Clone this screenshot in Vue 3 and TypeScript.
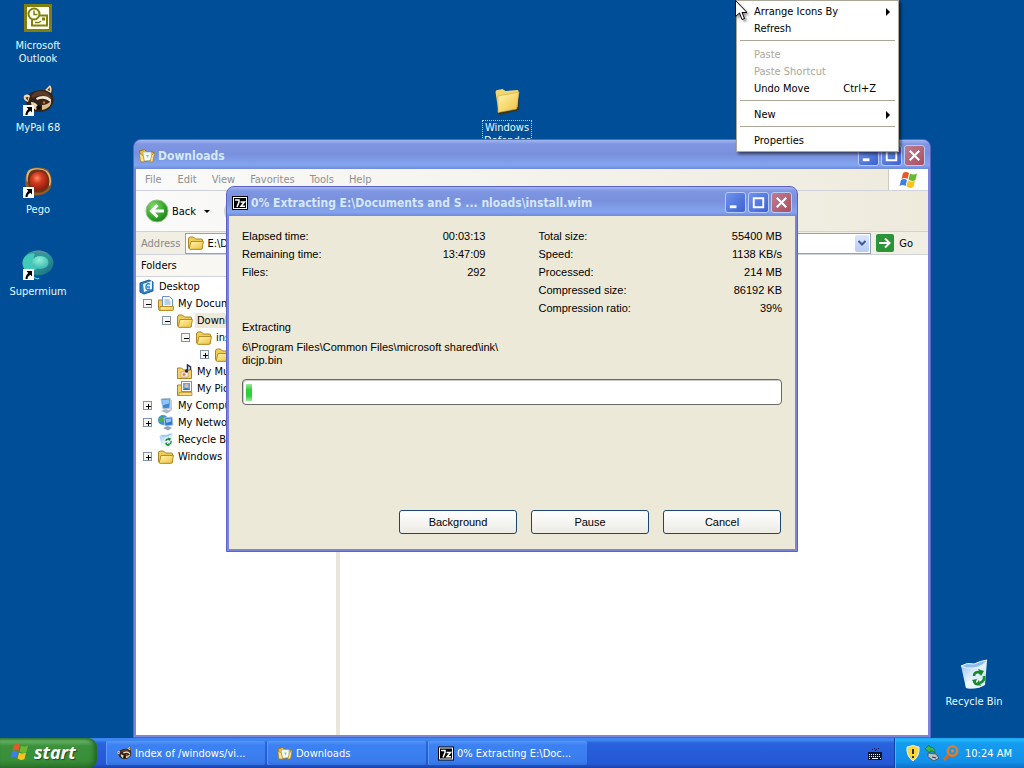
<script setup lang="ts">
import { ref } from 'vue'

interface TreeNode {
  label: string
  icon: string
  level: number
  toggle?: '+' | '-'
  selected?: boolean
}
interface Stat {
  label: string
  value: string
}

const shortcuts = [
  { id: 'outlook', label: 'Microsoft Outlook', icon: 'i-outlook', link: false },
  { id: 'mypal', label: 'MyPal 68', icon: 'i-raccoon', link: true },
  { id: 'pego', label: 'Pego', icon: 'i-pego', link: true },
  { id: 'supermium', label: 'Supermium', icon: 'i-supermium', link: true },
]

const menus = ['File', 'Edit', 'View', 'Favorites', 'Tools', 'Help']

const tree: TreeNode[] = [
  { label: 'Desktop', icon: 'i-desktop', level: 0 },
  { label: 'My Documents', icon: 'i-docs', level: 1, toggle: '-' },
  { label: 'Downloads', icon: 'i-folder', level: 2, toggle: '-', selected: true },
  { label: 'install', icon: 'i-folder', level: 3, toggle: '-' },
  { label: '', icon: 'i-folder', level: 4, toggle: '+' },
  { label: 'My Music', icon: 'i-music', level: 2 },
  { label: 'My Pictures', icon: 'i-pics', level: 2 },
  { label: 'My Computer', icon: 'i-computer', level: 1, toggle: '+' },
  { label: 'My Network Places', icon: 'i-network', level: 1, toggle: '+' },
  { label: 'Recycle Bin', icon: 'i-bin', level: 1 },
  { label: 'Windows Defender', icon: 'i-folder', level: 1, toggle: '+' },
]

const timing: Stat[] = [
  { label: 'Elapsed time:', value: '00:03:13' },
  { label: 'Remaining time:', value: '13:47:09' },
  { label: 'Files:', value: '292' },
]
const sizes: Stat[] = [
  { label: 'Total size:', value: '55400 MB' },
  { label: 'Speed:', value: '1138 KB/s' },
  { label: 'Processed:', value: '214 MB' },
  { label: 'Compressed size:', value: '86192 KB' },
  { label: 'Compression ratio:', value: '39%' },
]

const contextGroups = [
  [{ label: 'Arrange Icons By', sub: true }, { label: 'Refresh' }],
  [
    { label: 'Paste', disabled: true },
    { label: 'Paste Shortcut', disabled: true },
    { label: 'Undo Move', key: 'Ctrl+Z' },
  ],
  [{ label: 'New', sub: true }],
  [{ label: 'Properties' }],
] as { label: string; sub?: boolean; disabled?: boolean; key?: string }[][]

const tasks = [
  { label: 'Index of /windows/vi...', icon: 'i-raccoon' },
  { label: 'Downloads', icon: 'i-open' },
  { label: '0% Extracting E:\\Doc...', icon: 'i-7z' },
]

const address = ref('E:\\Documents and Settings\\Downloads')
</script>

<template>
  <div class="screen">
    <svg class="sprites" aria-hidden="true">
      <defs>
        <linearGradient id="gFolder" x1="0" y1="0" x2="1" y2="1">
          <stop offset="0" stop-color="#fff6b0" /><stop offset="1" stop-color="#eebf3c" />
        </linearGradient>
        <radialGradient id="gRed" cx=".4" cy=".35" r=".65">
          <stop offset="0" stop-color="#ff8a68" /><stop offset=".4" stop-color="#d23c22" /><stop offset="1" stop-color="#8e1c0c" />
        </radialGradient>
        <linearGradient id="gTeal" x1="0" y1="0" x2="1" y2="1">
          <stop offset="0" stop-color="#2e8f98" /><stop offset=".5" stop-color="#2f9a9c" /><stop offset="1" stop-color="#17667c" />
        </linearGradient>
        <radialGradient id="gMint" cx=".45" cy=".3" r=".75">
          <stop offset="0" stop-color="#8ff0da" /><stop offset="1" stop-color="#35b5ac" />
        </radialGradient>
        <radialGradient id="gGreen" cx=".35" cy=".3" r=".8">
          <stop offset="0" stop-color="#86db6c" /><stop offset=".6" stop-color="#35a52c" /><stop offset="1" stop-color="#1b7a1b" />
        </radialGradient>
        <linearGradient id="gBin" x1="0" y1="0" x2="1" y2="1">
          <stop offset="0" stop-color="#8fbcf0" /><stop offset=".5" stop-color="#e2f2ff" /><stop offset="1" stop-color="#c3dff2" />
        </linearGradient>
      </defs>
      <symbol id="i-outlook" viewBox="0 0 32 32">
        <rect x="2" y="2" width="28" height="28" fill="#808010" />
        <rect x="5" y="5" width="22" height="22" fill="#fffef0" />
        <path d="M15 13.500h10v10H10v-6" fill="none" stroke="#808010" stroke-width="2" />
        <circle cx="12" cy="12" r="5.500" fill="#fffef0" stroke="#808010" stroke-width="2" />
        <path d="M12 8.500v4h3.500" fill="none" stroke="#808010" stroke-width="1.500" />
        <path d="M13 20.500h4l2-1.500" fill="none" stroke="#808010" stroke-width="1.300" /><rect x="20" y="15.500" width="3" height="3" fill="#808010" />
      </symbol>
      <symbol id="i-raccoon" viewBox="0 0 32 32">
        <path d="M3 15c2-5 8-8 15-9l5 0l5-5c3 1 3 5 2 9c2 5 2 9-1 13c-4 5-12 6-17 4c-4-1-8-6-9-12z" fill="#33231b" />
        <path d="M2 12c1-2 5-2 6 0l-2 6c-3-1-5-3-4-6zM23 6l5-5c2 2 2 5 1 8z" fill="#e9d8b6" />
        <path d="M3.500 13.500q2-1 3 0l-1 3zM25.500 6l2-2.500.5 3.500z" fill="#4a3022" />
        <path d="M9 12c5-6 13-7 19-1l2 6c-5-6-12-7-19-3z" fill="#5d3d2a" />
        <path d="M14 14c5-3 11-3 15 1.500l0 3c-4-4-9-5-14-2.500z" fill="#f5ecd6" />
        <path d="M20 21c4 0 7-2 9-4c1 4-3 8-9 9z" fill="#d9bd8a" />
        <path d="M9 18c3 0 5 1 7 4l-2 4c-3-2-5-4-5-8z" fill="#e9d8b6" />
        <circle cx="22" cy="18.500" r="1.300" fill="#c86a28" /><circle cx="16.500" cy="23.500" r="2.200" fill="#120c0a" />
      </symbol>
      <symbol id="i-pego" viewBox="0 0 32 32">
        <path d="M8 3c6-2 13-2 18 1c4 5 5 13 2 19c-4 6-13 8-20 5c-6-6-7-19 0-25z" fill="#8c5a2c" />
        <path d="M7 4c6-3 14-2 18 1c4 4 5 10 3 15c-5-3-16-8-23-4c-1-4-1-9 2-12z" fill="#deb876" />
        <path d="M9 5c5-2 11-2 15 1c4 5 4 11 2 16c-4 5-11 6-16 3c-5-5-6-15-1-20z" fill="#6b3417" />
        <circle cx="17" cy="15" r="9.500" fill="url(#gRed)" />
      </symbol>
      <symbol id="i-supermium" viewBox="0 0 32 32">
        <ellipse cx="16" cy="15" rx="15.500" ry="12.500" fill="url(#gTeal)" />
        <path d="M1 12c2-5 8-8 12-6c-3 5-1 10 4 12c-4 6-10 7-13 5c-3-3-4-7-3-11z" fill="#43c9b8" />
        <path d="M10 13c3-7 13-6 16-1c2 5-2 9-8 9c-5 0-8-3-8-8z" fill="url(#gMint)" />
        <path d="M8 5c6-4 14-3 18 1c-6-1-12-2-18-1z" fill="#5f8f9a" />
        <path d="M12 29c2 2 4 2 5 1" stroke="#43c6d8" fill="none" stroke-width="1.500" />
      </symbol>
      <symbol id="i-arrow" viewBox="0 0 11 11">
        <rect width="11" height="11" fill="#fff" />
        <path d="M3.500 2H9v5.500L7.300 5.800C5.500 7 4.700 8 4.500 10H2.500C2.500 7.500 3.500 5.500 5.300 3.900z" fill="#000" />
      </symbol>
      <symbol id="i-bigfolder" viewBox="0 0 32 32">
        <path d="M6 29L27 25l1-15 1 1-1 15-19 5z" fill="#3a3518" />
        <path d="M4.500 8q0-2 2-2l5-1 3 2 12-1q1 0 1 2l-1 15-19 5z" fill="#f2d673" />
        <path d="M7 12l21-4-2.500 17L7 28.500z" fill="url(#gFolder)" stroke="#cfa93a" stroke-width=".6" />
      </symbol>
      <symbol id="i-folder" viewBox="0 0 16 16">
        <path d="M.5 4q0-2 2-2h3l2 2h6q1 0 1 1v8q0 1-1 1H2.500q-2 0-2-2z" fill="#f0cd58" stroke="#ad8420" />
        <path d="M3 6.500h12.500l-1.500 7q-.5 .8-1.500 .8H2.200q-1 0-.9-1z" fill="url(#gFolder)" stroke="#b78d27" />
      </symbol>
      <symbol id="i-open" viewBox="0 0 16 16">
        <path d="M.5 3l5-1.500 2 2 7 .5v8L2 14z" fill="#e7b93f" stroke="#9b7420" />
        <path d="M4 4h8l1 8-8 1z" fill="#f4faf4" stroke="#9ab0c0" stroke-width=".6" />
        <path d="M7 7l3 0-1.500 3z" fill="#8fc98f" />
        <path d="M.5 5.500l3.500 2 1.500 6.500-4-.5zM15.500 4.500l-3 3-1.500 7 3-1.500z" fill="#ffe58a" stroke="#a67d20" stroke-width=".6" />
      </symbol>
      <symbol id="i-docs" viewBox="0 0 16 16">
        <path d="M.5 4h4v10.500H2q-1.500 0-1.500-2z" fill="#f0cd58" stroke="#ad8420" />
        <path d="M4.500 .5h7l3 3V12h-10z" fill="#f4f9ff" stroke="#6d8fb8" />
        <path d="M6.500 4h5M6.500 6h6M6.500 8h6" stroke="#7da4d8" />
        <path d="M2 10.500h13.500v3q0 1-1 1H2z" fill="url(#gFolder)" stroke="#b78d27" />
      </symbol>
      <symbol id="i-music" viewBox="0 0 16 16">
        <path d="M.5 4h4l2 2h8v8.500H.5z" fill="#f3d468" stroke="#ad8420" />
        <rect x="4" y="8" width="7" height="5" fill="#fff2ea" stroke="#b88" stroke-width=".6" />
        <circle cx="7" cy="10.500" r="1.500" fill="#e08050" />
        <path d="M10.500 7V1l3 2v3" fill="none" stroke="#23304f" stroke-width="1.500" /><circle cx="9.500" cy="7" r="1.700" fill="#23304f" />
      </symbol>
      <symbol id="i-pics" viewBox="0 0 16 16">
        <path d="M.5 4h4l2 2h8v8.500H.5z" fill="#f3d468" stroke="#ad8420" />
        <rect x="4.500" y=".5" width="10" height="10" fill="#fff" stroke="#7892b4" />
        <rect x="6" y="2" width="7" height="7" fill="#66a5e6" /><circle cx="9.500" cy="5" r="2" fill="#f0b98f" /><path d="M6 9q3-4 7 0z" fill="#3b6db2" />
        <path d="M2 11.500h13v3H2z" fill="#f7dc7c" stroke="#b78d27" stroke-width=".7" />
      </symbol>
      <symbol id="i-computer" viewBox="0 0 16 16">
        <path d="M3 1l9-1 1 10-8 1z" fill="#3f86d9" stroke="#b8c7d8" />
        <path d="M4 2l7-.7 .3 4-6.500 2z" fill="#8cc5f6" />
        <path d="M12 1l2 1v10l-3 2z" fill="#c4ccd6" /><path d="M3 13l5-2 5 2-4 2.500z" fill="#aeb8c4" />
      </symbol>
      <symbol id="i-network" viewBox="0 0 16 16">
        <circle cx="5" cy="5" r="5" fill="#3f8fd0" /><path d="M1 3q4-3 6 0l-2 4-4 0z" fill="#49b04c" />
        <path d="M6 3l8-1 1 8-8 1z" fill="#2f76d0" stroke="#a9c4e3" /><path d="M7.500 4l5.500-.6 .3 3-5 1.600z" fill="#8cc5f6" />
        <path d="M5 13l5-2 4 2-4 2.500z" fill="#8fa4bc" />
      </symbol>
      <symbol id="i-desktop" viewBox="0 0 16 16">
        <path d="M1 4l9-3 4 2v9l-9 3-4-2z" fill="#2f80c8" stroke="#1c5c98" />
        <path d="M4 5l9-3v8l-8 3z" fill="#e8f5ff" />
        <path d="M11 5q-4-1-4 3t4 2M8 8h3" fill="none" stroke="#2a82cf" stroke-width="1.500" />
      </symbol>
      <symbol id="i-bin" viewBox="0 0 32 32">
        <path d="M3 8l13 1 13-6-2 24q-8 5-19 3z" fill="url(#gBin)" />
        <path d="M3 8q6-4 13-2q6-3 13-4q-3 6-13 8q-8 1-13-2z" fill="#8ebcf0" stroke="#e8f6ff" stroke-width="1" />
        <path d="M7 24q10-2 20-4l-.5 7q-8 5-18.500 3z" fill="#f2fbff" opacity=".7" />
        <g fill="none" stroke="#178a2c" stroke-width="2.600"><path d="M16 18q0-4 5-4l2 2" /><path d="M26 18q1 5-4 7" /><path d="M21 26q-4 1-5-3" /></g>
        <path d="M20 11l6 2-3 5zM14 22l5-1-2 5zM21 22l-3 4 5 2z" fill="#178a2c" />
      </symbol>
      <symbol id="i-7z" viewBox="0 0 16 14">
        <rect width="16" height="14" fill="#000" /><rect x="1" y="1" width="14" height="12" fill="#fff" /><rect x="2" y="2" width="12" height="10" fill="#000" />
        <path d="M3 4h4v2L5 11M8.500 6h4L9 10.300h4" fill="none" stroke="#fff" stroke-width="1.500" />
      </symbol>
      <symbol id="i-flag" viewBox="0 0 20 20">
        <path d="M4 3q3-2 6 0L8.500 9q-3-2-6 0z" fill="#e8562a" />
        <path d="M11 3.500q3 2 7 0L16.500 10q-3.500 2-7-.5z" fill="#69b82e" />
        <path d="M2 10q3-2 6 0l-1.500 6q-3-2-6 0z" fill="#3f7de8" />
        <path d="M9 10.500q3 2 7 0L14.500 17q-3.500 2-7-.5z" fill="#f8c520" />
      </symbol>
      <symbol id="i-keyboard" viewBox="0 0 14 12">
        <path d="M4 1.500h1M6 .5h1M8 1.500h1M10 .5h1M7 2.500h1" stroke="#081430" />
        <rect y="4" width="14" height="8" fill="#081430" />
        <path d="M1 6.500h12M1 8.500h12" stroke="#fff" stroke-dasharray="1 1" /><path d="M1 10.500h1M4 10.500h6M12 10.500h1" stroke="#fff" />
      </symbol>
      <symbol id="i-shield" viewBox="0 0 16 16">
        <path d="M8 0q3 2 6 2q1 9-6 14q-7-5-6-14q3 0 6-2z" fill="#f8d838" stroke="#eef2f8" />
        <path d="M8 4v5M8 11v2" stroke="#3a2c00" stroke-width="2" />
      </symbol>
      <symbol id="i-eject" viewBox="0 0 16 16">
        <path d="M4 8l8 1 3 4-5 3-6-4z" fill="#b9c2c9" stroke="#4c5b68" /><path d="M8 12l4 1" stroke="#333" />
        <path d="M1 4l4-4 1 2q5 0 5 6q-2-3-5-2v2z" fill="#3cb648" stroke="#14702a" stroke-width=".7" />
      </symbol>
      <symbol id="i-search" viewBox="0 0 16 16">
        <circle cx="9.500" cy="6" r="4.700" fill="none" stroke="#e07c2c" stroke-width="2.600" />
        <path d="M6 9.500L1 15" stroke="#d96b20" stroke-width="3" /><circle cx="9.500" cy="6" r="1.500" fill="#e88c3c" />
      </symbol>
    </svg>

    <main class="workspace">
      <nav class="shortcuts" aria-label="Desktop shortcuts">
        <button v-for="s in shortcuts" :key="s.id" type="button" class="shortcut">
          <span class="picture">
            <svg class="big"><use :href="'#' + s.icon" /></svg>
            <svg v-if="s.link" class="overlay"><use href="#i-arrow" /></svg>
          </span>
          <span class="caption">{{ s.label }}</span>
        </button>
      </nav>

      <button type="button" class="shortcut defender">
        <span class="picture"><svg class="big"><use href="#i-bigfolder" /></svg></span>
        <span class="caption focused">Windows Defender</span>
      </button>

      <button type="button" class="shortcut recycle">
        <span class="picture"><svg class="big"><use href="#i-bin" /></svg></span>
        <span class="caption">Recycle Bin</span>
      </button>

      <section class="window explorer" aria-label="Downloads">
        <header class="titlebar">
          <svg class="ico"><use href="#i-open" /></svg>
          <h1>Downloads</h1>
          <span class="controls">
            <button type="button" aria-label="Minimize"><svg viewBox="0 0 20 20"><path d="M4 14.500h7" stroke="#fff" stroke-width="3" /></svg></button>
            <button type="button" aria-label="Maximize"><svg viewBox="0 0 20 20"><path d="M4 5.500h12M5 5v10h10V5" stroke="#fff" stroke-width="2" fill="none" /></svg></button>
            <button type="button" class="close" aria-label="Close"><svg viewBox="0 0 20 20"><path d="M5 5l10 10M15 5L5 15" stroke="#fff" stroke-width="2.200" /></svg></button>
          </span>
        </header>
        <div class="menubar">
          <button v-for="m in menus" :key="m" type="button">{{ m }}</button>
          <span class="brand"><svg><use href="#i-flag" /></svg></span>
        </div>
        <div class="toolbar">
          <button type="button" class="back">
            <svg viewBox="0 0 24 24"><circle cx="12" cy="12" r="11" fill="url(#gGreen)" stroke="#8fc583" /><path d="M19 12H7M12.500 6L6.500 12l6 6" fill="none" stroke="#fff" stroke-width="3" /></svg>
            <span>Back</span>
            <i class="caret"></i>
          </button>
          <button type="button" class="forward" aria-label="Forward"></button>
        </div>
        <div class="addressbar">
          <label for="address">Address</label>
          <div class="combo">
            <svg class="ico"><use href="#i-folder" /></svg>
            <input id="address" v-model="address" type="text" />
            <button type="button" aria-label="Show addresses"><svg viewBox="0 0 14 16"><path d="M3.500 6l3.500 3.500L10.500 6" fill="none" stroke="#3c5a92" stroke-width="2" /></svg></button>
          </div>
          <button type="button" class="go">
            <svg viewBox="0 0 18 18"><rect width="18" height="18" rx="2" fill="#2c9438" /><path d="M3 9h10M9 4.500L13.500 9 9 13.500" fill="none" stroke="#fff" stroke-width="2" /></svg>
            <span>Go</span>
          </button>
        </div>
        <div class="panes">
          <aside class="folders">
            <h2>Folders</h2>
            <ul>
              <li v-for="(n, i) in tree" :key="i" :class="'level' + n.level">
                <button v-if="n.toggle" type="button" class="toggle" :aria-label="n.toggle === '+' ? 'Expand' : 'Collapse'">
                  <svg viewBox="0 0 9 9"><path d="M2 4.500h5" stroke="#000" /><path v-if="n.toggle === '+'" d="M4.500 2v5" stroke="#000" /></svg>
                </button>
                <span v-else-if="n.level" class="spacer"></span>
                <svg class="ico"><use :href="'#' + n.icon" /></svg>
                <span class="name" :class="{ selected: n.selected }">{{ n.label }}</span>
              </li>
            </ul>
          </aside>
          <div class="files"></div>
        </div>
      </section>

      <section class="window dialog" role="dialog" aria-label="Extracting">
        <header class="titlebar">
          <svg class="ico seven"><use href="#i-7z" /></svg>
          <h1>0% Extracting E:\Documents and S ... nloads\install.wim</h1>
          <span class="controls">
            <button type="button" aria-label="Minimize"><svg viewBox="0 0 20 20"><path d="M4 14.500h7" stroke="#fff" stroke-width="3" /></svg></button>
            <button type="button" aria-label="Maximize"><svg viewBox="0 0 20 20"><path d="M4 5.500h12M5 5v10h10V5" stroke="#fff" stroke-width="2" fill="none" /></svg></button>
            <button type="button" class="close" aria-label="Close"><svg viewBox="0 0 20 20"><path d="M5 5l10 10M15 5L5 15" stroke="#fff" stroke-width="2.200" /></svg></button>
          </span>
        </header>
        <div class="body">
          <div class="stats">
            <dl><div v-for="s in timing" :key="s.label"><dt>{{ s.label }}</dt><dd>{{ s.value }}</dd></div></dl>
            <dl><div v-for="s in sizes" :key="s.label"><dt>{{ s.label }}</dt><dd>{{ s.value }}</dd></div></dl>
          </div>
          <p class="status">Extracting</p>
          <p class="path">6\Program Files\Common Files\microsoft shared\ink\<br />dicjp.bin</p>
          <div class="progress" role="progressbar" aria-label="Extracting" aria-valuenow="0"><span></span></div>
          <div class="actions">
            <button type="button">Background</button>
            <button type="button">Pause</button>
            <button type="button">Cancel</button>
          </div>
        </div>
      </section>

      <div class="context" role="menu">
        <div v-for="(g, i) in contextGroups" :key="i" class="group">
          <button v-for="item in g" :key="item.label" type="button" role="menuitem" :disabled="item.disabled">
            <span>{{ item.label }}</span>
            <span v-if="item.key" class="key">{{ item.key }}</span>
            <i v-if="item.sub" class="sub"></i>
          </button>
        </div>
      </div>

      <svg class="pointer" viewBox="0 0 12 21"><path d="M.5 .5v16l4-3.500 2.500 6.500 2.500-1-2.500-6h5z" fill="#fff" stroke="#000" /></svg>
    </main>

    <footer class="taskbar">
      <button type="button" class="start"><svg><use href="#i-flag" /></svg><span>start</span></button>
      <div class="tasks">
        <button v-for="t in tasks" :key="t.label" type="button"><svg><use :href="'#' + t.icon" /></svg><span>{{ t.label }}</span></button>
      </div>
      <svg class="keyboard"><use href="#i-keyboard" /></svg>
      <div class="tray">
        <svg><use href="#i-shield" /></svg>
        <svg><use href="#i-eject" /></svg>
        <svg><use href="#i-search" /></svg>
        <time>10:24 AM</time>
      </div>
    </footer>
  </div>
</template>

<style>
body { margin: 0; background: #004e98; }
</style>

<style scoped>
* { box-sizing: border-box; }
button { font: inherit; color: inherit; background: none; border: 0; padding: 0; margin: 0; }
h1, h2, p, ul, dl, dd { margin: 0; padding: 0; }
svg { display: block; flex: none; }

.screen {
  min-height: 100vh;
  display: flex;
  flex-direction: column;
  overflow: hidden;
  background: #004e98;
  font: 11px/13px "DejaVu Sans Condensed", "Noto Sans", sans-serif;
  color: #000;
}
.sprites { position: absolute; width: 0; height: 0; }
.workspace { position: relative; flex: 1; min-height: 640px; }

.shortcuts { display: grid; grid-template-columns: 76px; grid-auto-rows: 82px; padding-top: 2px; }
.shortcut { display: flex; flex-direction: column; align-items: center; gap: 5px; width: 76px; align-self: start; color: #e6faff; }
.picture { position: relative; }
.big { width: 32px; height: 32px; }
.overlay { position: absolute; left: 1px; bottom: 0; width: 11px; height: 11px; }
.caption { max-width: 68px; text-align: center; }
.focused { outline: 1px dotted #b5d0ee; max-width: 48px; }
.defender { position: absolute; left: 469px; top: 84px; }
.recycle { position: absolute; right: 12px; bottom: 30px; }

.window {
  position: absolute;
  display: flex;
  flex-direction: column;
  border-radius: 8px 8px 0 0;
  border: 1px solid #5a62c4;
  padding: 0 2px 2px;
  background: #7b86da;
}
.explorer { left: 133px; right: 93px; top: 139px; bottom: 0; }
.dialog { left: 226px; top: 186px; width: 572px; }
.titlebar {
  display: flex;
  align-items: center;
  gap: 3px;
  height: 29px;
  margin: 0 -2px;
  padding: 2px 5px 0;
  border-radius: 7px 7px 0 0;
  background: linear-gradient(#a3b6f0 0, #7f97e2 4px, #7991dd 14px, #83a4ee 25px, #7089da 29px);
}
.titlebar h1 { flex: 1; font: bold 12px/16px "DejaVu Sans Condensed", "Open Sans", sans-serif; color: #d6e8fb; white-space: nowrap; }
.ico { width: 16px; height: 16px; }
.seven { height: 14px; }
.controls { display: flex; gap: 2px; }
.controls button { width: 21px; height: 21px; border: 1px solid #b8caf6; border-radius: 3px; background: linear-gradient(135deg, #6e93ee, #3e62cf); }
.controls svg { width: 19px; height: 19px; }
.controls .close { background: linear-gradient(135deg, #c07c92, #a84f60); }

.menubar { display: flex; align-items: stretch; height: 22px; background: linear-gradient(90deg, #fafafa, #eeebdd); color: #909090; border-bottom: 1px solid #cfd2da; }
.menubar button { padding: 0 7px 0 8px; }
.menubar button:first-child { padding: 0 8px 0 9px; }
.brand { margin-left: auto; width: 40px; display: grid; place-items: center; background: #fff; border-left: 1px solid #cfcbbd; }
.brand svg { width: 20px; height: 20px; }
.toolbar { display: flex; align-items: center; gap: 14px; height: 41px; padding-left: 9px; background: linear-gradient(90deg, #fafafa, #eeebdd); border-bottom: 1px solid #cfd2da; }
.back { display: flex; align-items: center; gap: 3px; }
.back svg { width: 24px; height: 24px; }
.caret { margin-left: 5px; border: 3px solid transparent; border-top-color: #000; border-bottom: 0; }
.forward { width: 24px; height: 24px; border-radius: 50%; background: #d0d4d4; }
.addressbar { display: flex; align-items: center; gap: 5px; height: 23px; padding: 0 15px 0 5px; background: #f1eee4; color: #888; border-bottom: 1px solid #cfd2da; }
.combo { flex: 1; display: flex; align-items: center; height: 21px; padding: 1px 1px 1px 2px; border: 1px solid #8ba3be; background: #fff; }
.combo input { flex: 1; min-width: 0; height: 17px; padding: 0 3px; border: 0; outline: 0; font: inherit; background: none; color: #000; }
.combo button { width: 14px; height: 17px; border-radius: 2px; background: linear-gradient(#dbe6fe, #b7cbf6); }
.combo button svg { width: 14px; height: 16px; }
.go { display: flex; align-items: center; gap: 5px; color: #000; }
.go svg { width: 18px; height: 18px; }
.panes { flex: 1; display: flex; min-height: 0; background: #fff; }
.folders { width: 204px; border-right: 4px solid #e8e5da; }
.folders h2 { height: 22px; padding-left: 5px; font: inherit; line-height: 21px; background: #f8f7f2; border-bottom: 1px solid #cfd2da; }
.folders ul { list-style: none; padding-top: 1px; }
.folders li { display: flex; align-items: center; height: 17px; white-space: nowrap; overflow: hidden; }
.name { margin-left: 2px; padding: 1px 2px; }
.selected { background: #ece9d8; }
.toggle { width: 9px; height: 9px; margin-right: 6px; border: 1px solid #8494a8; background: #f6f5f0; display: grid; place-items: center; flex: none; }
.toggle svg { width: 9px; height: 9px; }
.spacer { width: 15px; flex: none; }
.level0 { padding-left: 3px; }
.level1 { padding-left: 7px; }
.level2 { padding-left: 26px; }
.level3 { padding-left: 45px; }
.level4 { padding-left: 64px; }
.files { flex: 1; }

.body { padding: 11px 13px 15px; background: #ece9d8; font: 11px/18px "Liberation Sans", Arial, sans-serif; }
.stats { display: flex; gap: 53px; }
.stats dl { flex: 1; }
.stats div { display: flex; justify-content: space-between; }
.status { margin-top: 1px; }
.path { margin-top: 5px; line-height: 13px; }
.progress { height: 26px; margin-top: 12px; padding: 4px 3px; border: 1px solid #686868; border-radius: 4px; background: #fff; box-shadow: inset 1px 1px 1px #c8c8c8; }
.progress span { display: block; width: 6px; height: 17px; background: linear-gradient(#9be89b, #2fcf35 35%, #2fcf35 70%, #9be89b); }
.actions { display: flex; justify-content: flex-end; gap: 14px; margin-top: 105px; padding-right: 1px; }
.actions button { width: 118px; height: 24px; border: 1px solid #1c4670; border-radius: 3px; background: linear-gradient(#fff, #ecebe5); }

.context { position: absolute; left: 736px; top: 0; width: 163px; padding: 2px 3px; background: #fff; border: 1px solid #aca899; box-shadow: 2px 2px 3px rgba(0, 0, 0, 0.6); }
.group + .group { margin-top: 3px; padding-top: 5px; border-top: 1px solid #aca899; }
.group button { display: flex; align-items: center; width: 100%; height: 17px; padding: 0 5px 0 14px; }
.group button:disabled { color: #aca899; }
.key { margin-left: auto; margin-right: 14px; }
.sub { margin-left: auto; border: 4px solid transparent; border-left-color: #000; border-right: 0; }
.pointer { position: absolute; left: 735px; top: 0; width: 12px; height: 21px; filter: drop-shadow(2px 2px 1px rgba(0, 0, 0, 0.4)); }

.taskbar { position: relative; display: flex; align-items: stretch; height: 30px; color: #fff; background: linear-gradient(#3a80f0 0, #3f8cf3 2px, #2a62dc 5px, #255ad8 20px, #2458d4 26px, #1b41a5 30px); }
.start { display: flex; align-items: center; gap: 4px; width: 97px; padding: 0 0 2px 10px; border-radius: 0 9px 9px 0; background: linear-gradient(#388a38 0, #64b164 3px, #3c913c 8px, #388f38 22px, #2c752c 30px); box-shadow: inset -3px 0 4px #24642a; }
.start svg { width: 20px; height: 20px; }
.start span { font: italic bold 18px/20px "Open Sans", "Noto Sans", sans-serif; text-shadow: 1px 1px 1px #1d4d1d; }
.tasks { flex: 1; display: flex; gap: 2px; padding: 3px 0 3px 9px; min-width: 0; }
.tasks button { display: flex; align-items: center; gap: 3px; width: 159px; padding: 0 4px 0 10px; border-radius: 2px; background: linear-gradient(#5a97f6 0, #3c81f3 4px, #3a7cec 20px, #3371e0); box-shadow: inset 1px 0 #5b9af8; }
.tasks svg { width: 16px; height: 15px; }
.tasks span { white-space: nowrap; }
.keyboard { width: 14px; height: 12px; margin: 10px 12px 0 0; }
.tray { display: flex; align-items: center; gap: 3px; padding: 0 12px 0 10px; border-left: 1px solid #1042af; background: linear-gradient(#19a5f2 0, #25b8f8 2px, #149cf0 5px, #1290e8 24px, #0f6fc8 30px); box-shadow: inset 1px 0 #3ebdfa; }
.tray svg { width: 16px; height: 16px; }
.tray time { margin-left: 3px; }
</style>
